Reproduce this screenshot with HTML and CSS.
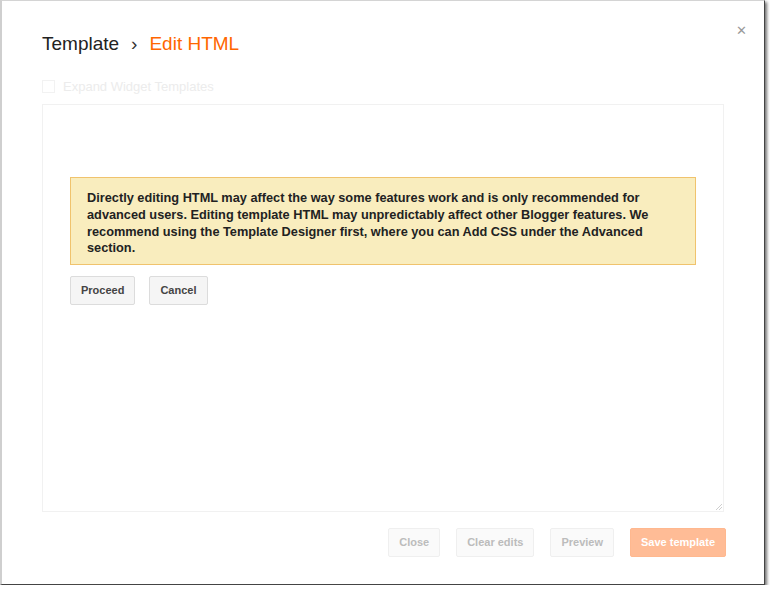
FILE: index.html
```html
<!DOCTYPE html>
<html lang="en">
<head>
  <meta charset="UTF-8">
  <title>Template - Edit HTML</title>
  <link rel="stylesheet" href="styles.css">
</head>
<body>

  <div class="window">
    <!-- header -->
    <div class="dialog-header">
      <span class="crumb">Template</span>
      <span class="crumb-sep">&rsaquo;</span>
      <span class="crumb current">Edit HTML</span>
    </div>
    <div class="close-x">&#x2715;</div>

    <!-- expand option (disabled until proceed) -->
    <label class="expand-row">
      <span class="fake-check"></span>
      Expand Widget Templates
    </label>

    <!-- editor area -->
    <div class="editor">
      <div class="warning">
        Directly editing HTML may affect the way some features work and is only recommended for advanced users. Editing template HTML may unpredictably affect other Blogger features. We recommend using the Template Designer first, where you can Add CSS under the Advanced section.
      </div>
      <div class="warning-actions">
        <div class="btn">Proceed</div>
        <div class="btn">Cancel</div>
      </div>
      <svg class="grip" width="7" height="7" viewBox="0 0 7 7">
        <path d="M1 7 L7 1 M4 7 L7 4" stroke="#cfcfcf" stroke-width="1"/>
      </svg>
    </div>

    <!-- footer buttons -->
    <div class="dialog-footer">
      <div class="btn disabled">Close</div>
      <div class="btn disabled">Clear edits</div>
      <div class="btn disabled">Preview</div>
      <div class="btn save">Save template</div>
    </div>
  </div>

</body>
</html>
```

FILE: styles.css
```css
body {
  margin: 0;
  background: #fff;
  font-family: "Liberation Sans", Arial, sans-serif;
}

.window {
  position: relative;
  box-sizing: border-box;
  width: 765px;
  height: 585px;
  border-left: 2px solid #cfcfcf;
  border-top: 1px solid #d4d4d4;
  border-right: 1px solid #444;
  border-bottom: 1px solid #444;
  box-shadow: 2px 2px 3px rgba(0, 0, 0, 0.55);
  background: #fff;
  padding: 31px 40px 0 40px;
}

/* header */
.dialog-header {
  display: flex;
  align-items: baseline;
  font-size: 19px;
  line-height: 24px;
  color: #222;
}

.crumb-sep {
  margin: 0 12px 0 12px;
  color: #333;
}

.crumb.current {
  color: #f60;
}

.close-x {
  position: absolute;
  top: 22px;
  right: 17px;
  font-size: 13px;
  color: #9a9a9a;
  cursor: pointer;
}

/* checkbox row */
.expand-row {
  display: flex;
  align-items: center;
  margin-top: 21px;
  height: 18px;
  font-size: 13px;
  color: #ececec;
}

.fake-check {
  box-sizing: border-box;
  width: 13px;
  height: 13px;
  border: 1px solid #f2f2f2;
  margin-right: 8px;
}

/* editor */
.editor {
  position: relative;
  box-sizing: border-box;
  height: 408px;
  margin-top: 9px;
  border: 1px solid #f1f1f1;
  padding: 72px 27px 0 27px;
}

.warning {
  background: #f9edbe;
  border: 1px solid #f0c36d;
  padding: 12px 16px 7px 16px;
  font-size: 12.75px;
  font-weight: bold;
  line-height: 16.75px;
  color: #222;
}

.warning-actions {
  display: flex;
  gap: 14px;
  margin-top: 11px;
}

.grip {
  position: absolute;
  right: 1px;
  bottom: 1px;
}

/* buttons */
.btn {
  box-sizing: border-box;
  height: 29px;
  line-height: 27px;
  padding: 0 10px;
  background: #f5f5f5;
  border: 1px solid #dcdcdc;
  border-radius: 2px;
  font-size: 11px;
  font-weight: bold;
  color: #444;
  cursor: pointer;
}

.btn.disabled {
  background: #fafafa;
  border-color: #efefef;
  color: #bcbcbc;
}

.btn.save {
  background: #ffbc96;
  border-color: #ffb88f;
  color: #fff;
}

.dialog-footer {
  display: flex;
  justify-content: flex-end;
  gap: 16px;
  margin-top: 16px;
  margin-right: -2px;
}
```
